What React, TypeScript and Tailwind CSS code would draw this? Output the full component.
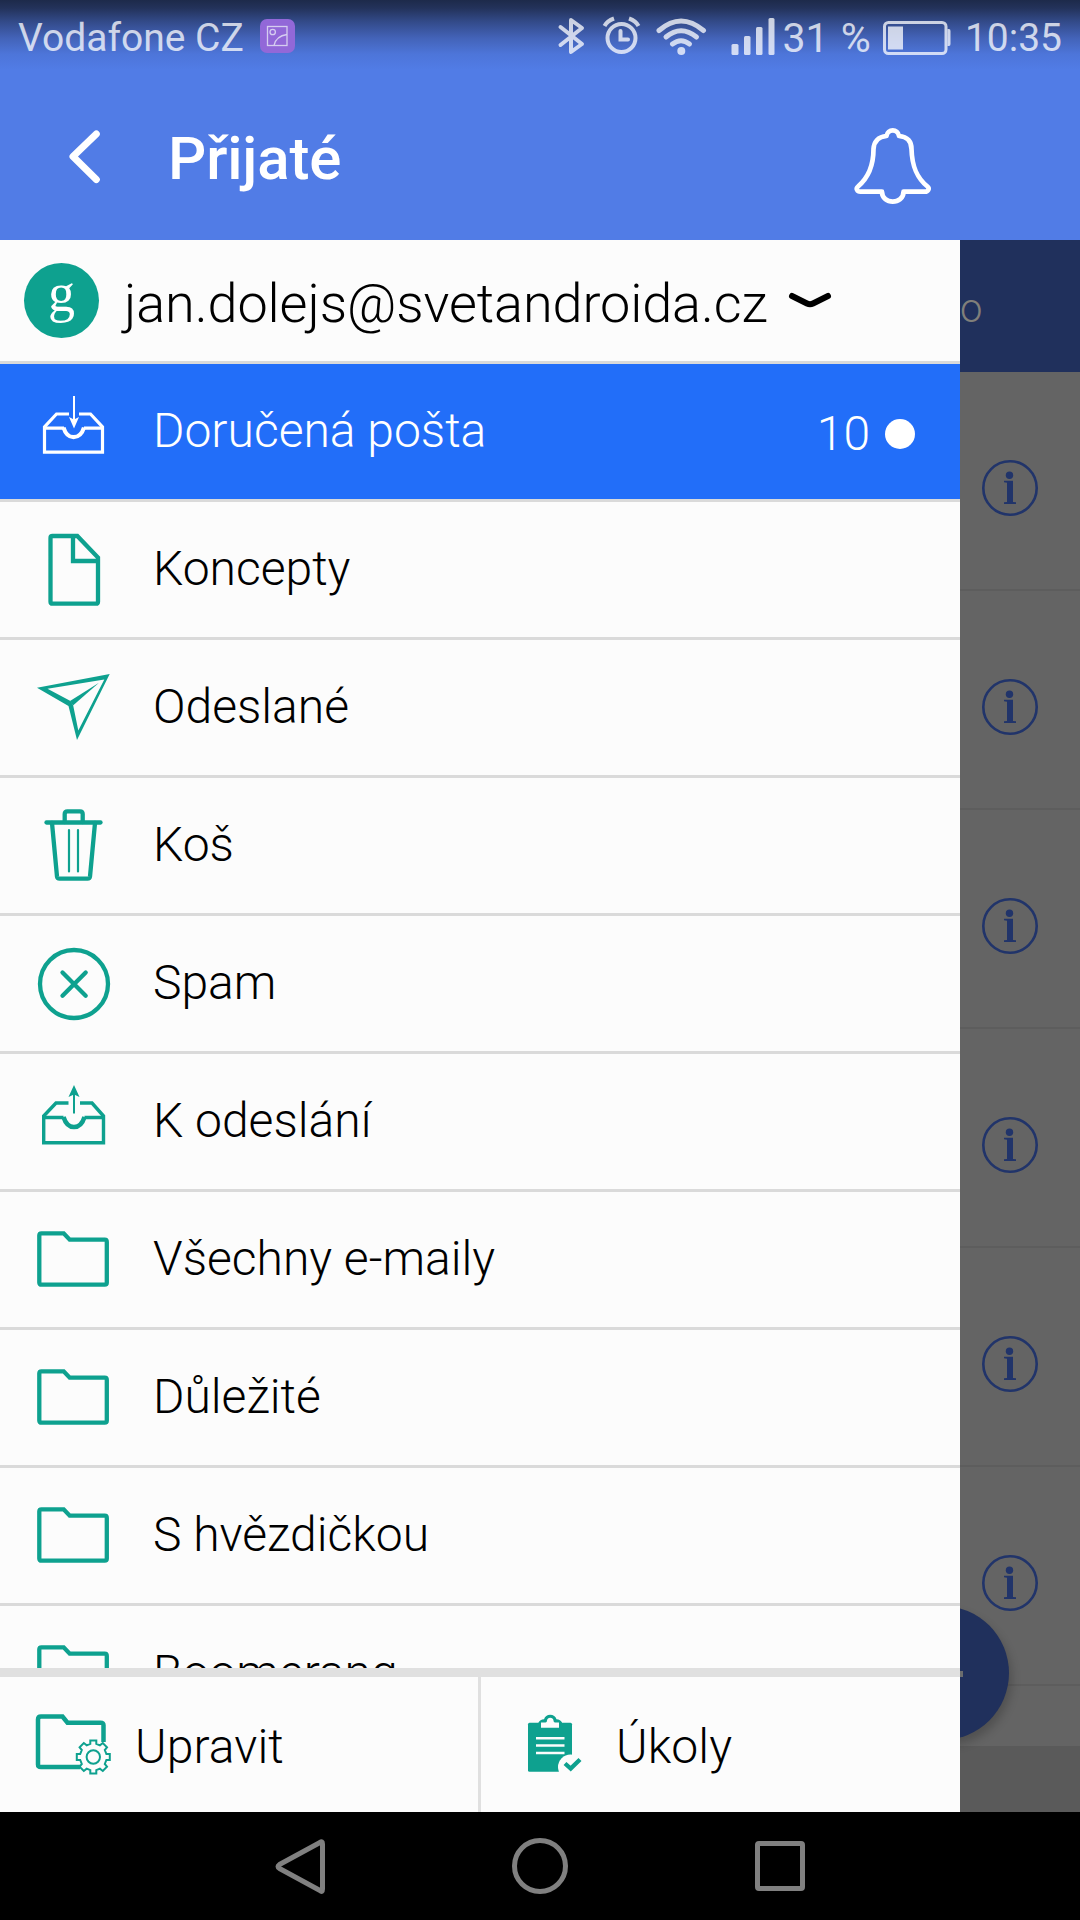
import type { ReactNode } from "react";
import clsx from "clsx";

const Icon = ({ children, className }: { children: ReactNode; className?: string }) => (
  <svg
    viewBox="0 0 76 75"
    fill="none"
    stroke="currentColor"
    strokeWidth={4.3}
    className={clsx("w-[76px] h-[75px] shrink-0", className)}
  >
    {children}
  </svg>
);

const InboxIcon = () => (
  <Icon>
    <g strokeWidth={3.2}>
      <path d="M33 20H20.5L8.5 33V58.2H66.5V33L54.5 20H43" />
      <path d="M8.5 34.2H28M48 34.2H66.5" />
      <path d="M27.5 33.5C29.5 40 33 43.2 37.5 43.2S46 40 48 33.5" strokeWidth={4.2} />
      <path d="M38 2V28" strokeWidth={2} />
    </g>
    <path d="M33 23L38 25.5L43 23L38 34.5Z" fill="currentColor" stroke="none" />
  </Icon>
);

const OutboxIcon = () => (
  <Icon>
    <g strokeWidth={3.4}>
      <path d="M32.5 19H20L7.7 32V58.7H67.5V32L56 19H44" />
      <path d="M7.7 33.5H27.5M48.5 33.5H67.5" />
      <path d="M27.5 33C29.5 39.5 33 43 38 43S46.5 39.5 48.5 33" strokeWidth={4.5} />
      <path d="M38 8V29.5" strokeWidth={2} />
    </g>
    <path d="M38 1L43.5 13L38 10.5L32.5 13Z" fill="currentColor" stroke="none" />
  </Icon>
);

const DraftIcon = () => (
  <Icon>
    <path d="M16.5 4H41.3L62 25.5V69.7Q62 71.7 60 71.7H16.5Q14.5 71.7 14.5 69.7V6Q14.5 4 16.5 4ZM37 4V29H62" />
  </Icon>
);

const SentIcon = () => (
  <Icon>
    <g fill="currentColor" stroke="none">
      <path
        fillRule="evenodd"
        d="M1 17.7L73.7 4L41 70L32.5 36ZM11.5 18.7L34.5 31L37.2 35.5L42.3 60.5L68.3 9.5Z"
      />
      <path d="M34 31L63 12.7L37 35.5Z" />
    </g>
  </Icon>
);

const TrashIcon = () => (
  <Icon>
    <g strokeLinecap="round" strokeLinejoin="round">
      <path d="M10.5 14.5H64.5" />
      <path d="M28.7 14V6Q28.7 3.3 31.4 3.3H44Q46.7 3.3 46.7 6V14" />
      <path d="M16 15L21 68.5Q21.3 70.7 23.5 70.7H51.5Q53.7 70.7 54 68.5L59 15" />
      <path d="M33 22V63.5M42 22V63.5" strokeWidth={2.2} />
    </g>
  </Icon>
);

const SpamIcon = () => (
  <Icon>
    <circle cx="38" cy="38" r="34" />
    <path d="M26.5 26.5L49.7 49.7M49.7 26.5L26.5 49.7" strokeLinecap="round" />
  </Icon>
);

const FolderIcon = () => (
  <Icon>
    <path d="M5.5 11.3H27.7L33.7 17.7H68.7Q70.8 17.7 70.8 20V60.5Q70.8 62.7 68.7 62.7H5.5Q3.3 62.7 3.3 60.5V13.5Q3.3 11.3 5.5 11.3Z" />
  </Icon>
);

const EditFoldersIcon = () => (
  <Icon className="text-[#0ea18f]">
    <path d="M45 60H6Q3 60 3 57.5V12.5Q3 9.5 6 9.5H27.5L32.5 15.7H65.500Q68.500 15.7 68.500 18.2V35" strokeWidth={4.5} />
    <g strokeWidth={2} transform="translate(58.3 50)">
      <path
        d="M-3 -16.5H3V-13.2L6.6 -11.7L9.5 -14L13.7 -9.7L11.5 -7L13.1 -3H16.5V3H13.1L11.5 7L13.7 9.7L9.5 14L6.6 11.7L3 13.2V16.5H-3V13.2L-6.6 11.7L-9.5 14L-13.7 9.7L-11.5 7L-13.1 3H-16.5V-3H-13.1L-11.5 -7L-13.7 -9.7L-9.5 -14L-6.6 -11.7L-3 -13.2Z"
        fill="#fcfcfc"
      />
      <circle r="6.7" />
    </g>
  </Icon>
);

const TasksIcon = () => (
  <Icon className="text-[#0ea18f]">
    <rect x="12" y="15.7" width="44" height="49" rx="1.5" fill="currentColor" stroke="none" />
    <path
      d="M22.5 17V15.5Q24 12.5 28 12.3Q29.5 7.7 34.2 7.7Q39 7.7 40.5 12.3Q44.5 12.5 46 15.5V17Z"
      fill="currentColor"
      stroke="none"
    />
    <path
      d="M25 20.7V15.5H29.5Q31 15.3 31 13.5Q31.5 10.7 34.2 10.7Q37 10.7 37.5 13.5Q37.5 15.3 39 15.5H43V20.7Z"
      fill="#fcfcfc"
      stroke="none"
    />
    <path d="M20 31.2H48.5M20 38.5H48.5M20 46H48.5" stroke="#fcfcfc" strokeWidth={2.5} />
    <circle cx="54.5" cy="60" r="12.5" fill="#fcfcfc" stroke="none" />
    <path d="M49 56.5L54.7 61.5L64 52.5" />
  </Icon>
);

type Folder = { label: string; icon: () => ReactNode; unread?: number };

const folders: Folder[] = [
  { label: "Doručená pošta", icon: InboxIcon, unread: 10 },
  { label: "Koncepty", icon: DraftIcon },
  { label: "Odeslané", icon: SentIcon },
  { label: "Koš", icon: TrashIcon },
  { label: "Spam", icon: SpamIcon },
  { label: "K odeslání", icon: OutboxIcon },
  { label: "Všechny e-maily", icon: FolderIcon },
  { label: "Důležité", icon: FolderIcon },
  { label: "S hvězdičkou", icon: FolderIcon },
  { label: "Boomerang", icon: FolderIcon },
];

const StatusBar = () => (
  <div className="flex h-[72px] items-center justify-between px-[18px] text-[39px] leading-none text-white/75">
    <div className="flex items-center gap-4">
      <span className="pt-1">Vodafone CZ</span>
      <svg viewBox="0 0 35 34" fill="none" className="w-[35px] h-[34px]">
        <rect width="35" height="34" rx="7" fill="#9268d8" />
        <g stroke="#d5cdf0" strokeWidth={1.3}>
          <rect x="7.5" y="7.5" width="19.5" height="19" />
          <circle cx="12.7" cy="13" r="2.7" />
          <path d="M14 26.5Q16 17 27 15.5" />
        </g>
      </svg>
    </div>
    <div className="flex items-center">
      <svg viewBox="0 0 220 40" fill="none" stroke="currentColor" className="w-[220px] h-10 mr-1.5">
        {/* bluetooth */}
        <path d="M3.5 11L25 28L14 36V4L25 12L3.5 29" strokeWidth={4} strokeLinecap="round" strokeLinejoin="round" />
        {/* alarm */}
        <circle cx="64.5" cy="22" r="14" strokeWidth={4} />
        <path d="M63.5 15V23.5H71" strokeWidth={4} strokeLinecap="round" />
        <path d="M47.5 10Q50 5 57 2.5M81.5 10Q79 5 72 2.5" strokeWidth={4} />
        {/* wifi */}
        <g strokeWidth={5} strokeLinecap="round">
          <path d="M102 14.5Q124 -4.5 146.5 14.5" />
          <path d="M109 21Q124 8.5 139.5 21" />
          <path d="M115.5 28Q124 21.5 132.5 28" />
        </g>
        <circle cx="124.3" cy="35" r="4" fill="currentColor" stroke="none" />
        {/* signal */}
        <g fill="currentColor" stroke="none">
          <rect x="174.5" y="28" width="7" height="11" rx="1.5" />
          <rect x="187" y="20" width="6.5" height="19" rx="1.5" />
          <rect x="199" y="11" width="6.5" height="28" rx="1.5" />
          <rect x="211.5" y="2" width="6" height="37" rx="1.5" />
        </g>
      </svg>
      <span className="pt-1 text-[41px] [word-spacing:2px]">31 %</span>
      <svg viewBox="0 0 68 34" fill="none" className="mt-[3px] ml-3 mr-[14px] w-[68px] h-[34px]">
        <rect x="1.5" y="1.5" width="61.5" height="31" rx="4" stroke="currentColor" strokeWidth={3} />
        <rect x="5" y="5.5" width="15" height="23" fill="currentColor" />
        <path d="M64.5 8H66Q67.5 8 67.5 10V23Q67.5 25 66 25H64.5Z" fill="currentColor" />
      </svg>
      <span className="pt-1">10:35</span>
    </div>
  </div>
);

const Header = () => (
  <header className="h-60 bg-[#517ce6] bg-[linear-gradient(to_bottom,#1d2a4a_0px,#23325a_8px,#334b8a_22px,#4363b8_38px,#4d75d9_54px,#517ce6_70px)] text-white">
    <StatusBar />
    <div className="flex items-center h-[170px] pl-[66px]">
      <svg
        viewBox="0 0 36 56"
        fill="none"
        stroke="currentColor"
        strokeWidth={7}
        strokeLinecap="round"
        strokeLinejoin="round"
        className="w-9 h-14"
      >
        <path d="M30.3 5L7 27.5L30.3 50.5" />
      </svg>
      <h1 className="ml-[66px] pt-[3px] text-[60px] font-medium leading-none tracking-[-0.15px]">Přijaté</h1>
      <svg
        viewBox="0 0 86 84"
        fill="none"
        stroke="currentColor"
        strokeWidth={4.7}
        strokeLinejoin="round"
        className="ml-auto mr-36 mt-[18px] w-[86px] h-[84px]"
      >
        <path d="M36.5 12C37.5 4.5 48 4.5 49 12C58 12.5 61.5 18 61.5 25C62 43 67 54 77.5 62.5C80 64.5 78 67.7 75 67.7H53.5C53.5 81 32 81 32 67.7H10.5C7 67.7 5.5 64.5 8 62.5C18 54 23.5 43 23.5 25C24 18 28 12.5 36.5 12Z" />
      </svg>
    </div>
  </header>
);

const AccountRow = () => (
  <div className="flex items-center h-[124px] border-b-3 border-[#dadada]">
    <div className="ml-6 flex w-[75px] h-[75px] items-center justify-center rounded-full bg-[#0ea18f]">
      <span className="font-['Liberation_Serif',serif] text-[54px] leading-none text-white -translate-y-[8px]">g</span>
    </div>
    <span className="ml-[25px] pt-1.5 text-[54px] leading-none tracking-[-0.1px]">jan.dolejs@svetandroida.cz</span>
    <svg
      viewBox="0 0 46 20"
      fill="none"
      stroke="currentColor"
      strokeWidth={6}
      strokeLinecap="round"
      strokeLinejoin="round"
      className="ml-[19px] w-[46px] h-5"
    >
      <path d="M5 5L20 12.5Q23 14 26 12.5L41 5" />
    </svg>
  </div>
);

const FolderRow = ({ folder }: { folder: Folder }) => {
  const { label, icon: FolderGlyph, unread } = folder;
  return (
    <li
      className={clsx(
        "flex items-center h-[138px] shrink-0 border-b-3 border-[#dadada] pl-9 text-[48px] leading-none",
        unread && "bg-[#226ef9]"
      )}
    >
      <span className={unread ? "text-white" : "text-[#0ea18f]"}>
        <FolderGlyph />
      </span>
      <span className={clsx("ml-[41px] pb-[2px]", unread && "text-white")}>{label}</span>
      {unread && (
        <span className="ml-auto mr-[45px] mt-1 flex items-center gap-[15px] text-white">
          {unread}
          <span className="w-[30px] h-[30px] rounded-full bg-white" />
        </span>
      )}
    </li>
  );
};

const Drawer = () => (
  <aside className="relative z-10 flex w-[960px] shrink-0 flex-col bg-[#fcfcfc] font-light text-black">
    <AccountRow />
    <ul className="flex flex-1 min-h-0 flex-col overflow-hidden">
      {folders.map((folder) => (
        <FolderRow key={folder.label} folder={folder} />
      ))}
    </ul>
    <div className="flex h-36 border-t-9 border-[#e0e0e0] text-[48px] leading-none">
      <div className="flex items-center w-[481px] border-r-3 border-[#e0e0e0] pl-[35px]">
        <EditFoldersIcon />
        <span className="ml-6 pt-1 tracking-[0.1px]">Upravit</span>
      </div>
      <div className="flex flex-1 items-center pl-[35px]">
        <TasksIcon />
        <span className="ml-6 pt-1 tracking-[0.1px]">Úkoly</span>
      </div>
    </div>
  </aside>
);

const InfoIcon = () => (
  <svg viewBox="0 0 56 56" fill="none" className="w-14 h-14">
    <circle cx="28" cy="28" r="26.7" stroke="#21346a" strokeWidth={2.6} />
    <g fill="#21346a">
      <circle cx="27.5" cy="15.3" r="3.7" />
      <path d="M22 20.8H31V42L34 42.3V44H22V42.3L25 42V22.8L22 22.3Z" />
    </g>
  </svg>
);

// Message list dimmed behind the open drawer
const DimmedInbox = () => (
  <main className="relative flex-1 overflow-hidden bg-[#5a5a5a]">
    <div className="flex items-center h-[132px] bg-[#20305c]">
      <span className="mt-[5px] text-[40px] font-light leading-none text-[#807f7a]">o</span>
    </div>
    <div className="h-[1374px] overflow-hidden bg-[#646464]">
      {Array.from({ length: 6 }, (_, i) => (
        <div key={i} className="h-[219px] border-b-2 border-[#5d5d5d] pl-[22px] pt-[88px]">
          <InfoIcon />
        </div>
      ))}
    </div>
    <div className="absolute top-[1366px] left-[-85px] flex w-[134px] h-[134px] items-center justify-center rounded-full bg-[#20305c] shadow-[3px_6px_10px_rgba(0,0,0,0.2)]">
      <span className="mt-px w-[42px] h-1.5 bg-[#6b6d6e]" />
    </div>
  </main>
);

const NavBar = () => (
  <nav className="flex h-[108px] items-center justify-center gap-[184px] bg-black text-[#808080]">
    {[
      <path d="M48 7.5Q50.5 5.5 50.5 9V54Q50.5 58 48 55.5L7.5 33.5Q4.500 31.5 7.5 29.5Z" />,
      <circle cx="28" cy="31" r="25.5" />,
      <rect x="5.5" y="8.5" width="45" height="45" rx="1.5" />,
    ].map((shape, i) => (
      <svg
        key={i}
        viewBox="0 0 56 63"
        fill="none"
        stroke="currentColor"
        strokeWidth={5}
        strokeLinejoin="round"
        className="w-14 h-[63px]"
      >
        {shape}
      </svg>
    ))}
  </nav>
);

const App = () => {
  return (
    <div className="flex w-[1080px] h-[1920px] flex-col overflow-hidden bg-black font-[Roboto,sans-serif]">
      <Header />
      <div className="flex flex-1 min-h-0">
        <Drawer />
        <DimmedInbox />
      </div>
      <NavBar />
    </div>
  );
};

export default App;
